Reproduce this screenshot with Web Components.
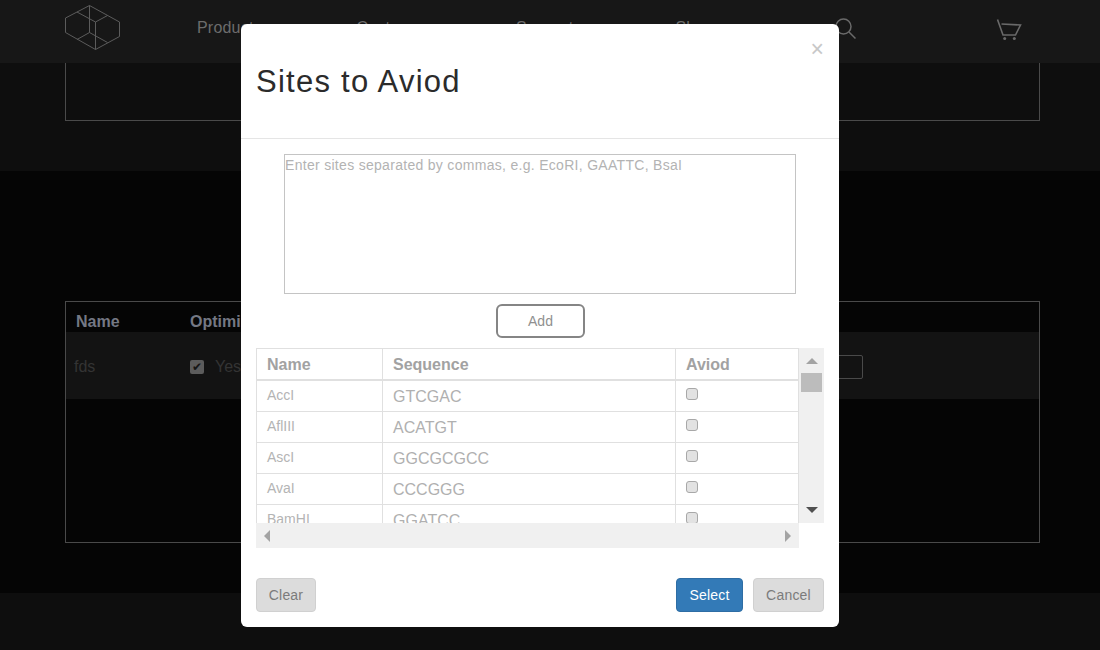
<!DOCTYPE html>
<html>
<head>
<meta charset="utf-8">
<title>Sites to Aviod</title>
<style>
html, body { margin: 0; height: 100%; background: #050505; overflow: hidden; }
body { font-family: "Liberation Sans", Arial, sans-serif; }
</style>
</head>
<body>

<site-header></site-header>
<page-band>
    <order-table></order-table>
</page-band>
<page-footer></page-footer>

<sites-modal title-text="Sites to Aviod">
    <sites-table></sites-table>
</sites-modal>

<script>
class SiteHeader extends HTMLElement {

    static template = document.createElement('template');

    constructor() {
        super();
        this.attachShadow({ mode: 'open' });
        this.shadowRoot.append(SiteHeader.template.content.cloneNode(true));
    }

}

SiteHeader.template.innerHTML = `
<style>
:host { display: block; height: 63px; background: #171717; }
.bar { display: flex; align-items: flex-start; height: 100%; padding-left: 65px; color: #6c6c6c; }
.logo { width: 55px; height: 45px; margin-top: 5px; flex: none; }
nav { display: flex; margin-left: 77px; margin-top: 19px; font-size: 16px; letter-spacing: .2px; }
nav span { width: 159.5px; }
.search { margin-left: 0; margin-top: 18px; flex: none; }
.cart { margin-left: 139px; margin-top: 18px; flex: none; }
</style>
<div class="bar">
    <svg class="logo" viewBox="0 0 55 45" fill="none" stroke="#5c5c5c" stroke-width="1">
        <path d="M24.500 .5 L54.500 17 V31.500 L30.500 44.500 L.5 27.500 V13 Z"/>
        <path d="M24.500 .5 V27.500 M30.500 17 V44.500 M12 7 L30.500 17 L42.500 10.500 M12 34.500 L24.500 27.500 L42.500 37.500"/>
    </svg>
    <nav><span>Product</span><span>Custom</span><span>Support</span><span>Share</span></nav>
    <svg class="search" width="22" height="22" viewBox="0 0 22 22" fill="none" stroke="#6a6a6a" stroke-width="1.500">
        <circle cx="8.500" cy="8.500" r="7.500"/>
        <path d="M14 14 L20.500 20.500"/>
    </svg>
    <svg class="cart" width="26" height="24" viewBox="0 0 26 24" fill="none" stroke="#6a6a6a" stroke-width="1.600">
        <path d="M1.500 1.500 L7 17 H19.500 L24.500 7 L5.500 6"/>
        <circle cx="8.700" cy="20.500" r="1.500" fill="#6a6a6a" stroke="none"/>
        <circle cx="18.300" cy="20.500" r="1.500" fill="#6a6a6a" stroke="none"/>
    </svg>
</div>
`;

customElements.define('site-header', SiteHeader);

class PageBand extends HTMLElement {

    static template = document.createElement('template');

    constructor() {
        super();
        this.attachShadow({ mode: 'open' });
        this.shadowRoot.append(PageBand.template.content.cloneNode(true));
    }

}

PageBand.template.innerHTML = `
<style>
:host { display: block; }
.top { height: 108px; background: #0e0e0e; padding: 0 60px 0 65px; box-sizing: border-box; }
.panel { height: 58px; border: 1px solid #4a4a4a; border-top: 0; box-sizing: border-box; }
.main { height: 422px; background: #050505; padding: 130px 60px 0 65px; box-sizing: border-box; }
</style>
<div class="top"><div class="panel"></div></div>
<div class="main"><slot></slot></div>
`;

customElements.define('page-band', PageBand);

class OrderTable extends HTMLElement {

    static template = document.createElement('template');

    constructor() {
        super();
        this.attachShadow({ mode: 'open' });
        this.shadowRoot.append(OrderTable.template.content.cloneNode(true));
    }

}

OrderTable.template.innerHTML = `
<style>
:host { display: block; height: 242px; box-sizing: border-box; border: 1px solid #4a4a4a; font-size: 16px; }
.head { display: flex; height: 30px; padding: 11px 0 0 10px; box-sizing: border-box; color: #747884; font-weight: bold; }
.head span:first-child { width: 114px; }
.row > span:first-child { width: 116px; }
.row { display: flex; align-items: center; height: 67px; padding: 2px 8px 0; box-sizing: border-box; background: #131313; color: #343434; }
.opt { display: flex; align-items: center; gap: 11px; }
.box { width: 14px; height: 14px; border-radius: 2px; background: #5c5c5c; color: #161616; font-size: 12px; line-height: 14px; text-align: center; }
.spacer { flex: 1; }
.input { width: 80px; height: 22px; border: 1px solid #4a4a4a; border-radius: 2px; margin-right: 168px; }
</style>
<div class="head"><span>Name</span><span>Optimize</span></div>
<div class="row">
    <span>fds</span>
    <span class="opt"><span class="box">&#10004;</span>Yes</span>
    <span class="spacer"></span>
    <span class="input"></span>
</div>
`;

customElements.define('order-table', OrderTable);

class PageFooter extends HTMLElement {

    static template = document.createElement('template');

    constructor() {
        super();
        this.attachShadow({ mode: 'open' });
        this.shadowRoot.append(PageFooter.template.content.cloneNode(true));
    }

}

PageFooter.template.innerHTML = `
<style>
:host { display: block; height: 57px; background: #0e0e0e; }
</style>
`;

customElements.define('page-footer', PageFooter);

class SitesModal extends HTMLElement {

    static template = document.createElement('template');

    constructor() {
        super();
        this.attachShadow({ mode: 'open' });
        this.shadowRoot.append(SitesModal.template.content.cloneNode(true));
        this.shadowRoot.querySelector('h4').textContent = this.getAttribute('title-text');
    }

}

SitesModal.template.innerHTML = `
<style>
:host { display: block; position: absolute; left: 241px; top: 24px; width: 598px; height: 603px; background: #fff; border-radius: 6px; box-sizing: border-box; color: #333; }
header { position: relative; height: 115px; border-bottom: 1px solid #e5e5e5; box-sizing: border-box; padding: 39px 15px 0; }
h4 { margin: 0; font-size: 31px; font-weight: normal; line-height: 38px; letter-spacing: 1.250px; color: #2b2b2b; }
.close { position: absolute; right: 15px; top: 14px; font-size: 23px; line-height: 23px; color: #c8c8c8; }
.body { display: flex; flex-direction: column; align-items: center; padding: 15px 15px 0; }
textarea { display: block; width: 512px; height: 140px; box-sizing: border-box; margin: 0; padding: 2px 0; resize: none; border: 1px solid #c4c4c4; outline: 0; font: 14px/17px "Liberation Sans", Arial, sans-serif; letter-spacing: .3px; }
textarea::placeholder { color: #b3b3b3; opacity: 1; }
.add { width: 89px; height: 34px; margin: 10px 0; box-sizing: border-box; padding: 0 0 0 1px; background: #fff; border: 2px solid #858585; border-radius: 6px; font: 14px "Liberation Sans", Arial, sans-serif; color: #909090; }
.table { align-self: stretch; }
footer { display: flex; gap: 10px; padding: 30px 15px 0; }
button.act { height: 34px; box-sizing: border-box; padding: 0; border: 1px solid #d0d0d0; border-radius: 4px; background: #dcdcdc; color: #7b7b7b; font: 14px "Liberation Sans", Arial, sans-serif; letter-spacing: .2px; }
.clear { width: 60px; margin-right: auto; }
button.select { width: 67px; background: #337ab7; border-color: #2e6da4; color: #fff; }
.cancel { width: 71px; }
</style>
<header>
    <h4></h4>
    <span class="close">&times;</span>
</header>
<div class="body">
    <textarea placeholder="Enter sites separated by commas, e.g. EcoRI, GAATTC, BsaI"></textarea>
    <button class="add">Add</button>
    <div class="table"><slot></slot></div>
</div>
<footer>
    <button class="act clear">Clear</button>
    <button class="act select">Select</button>
    <button class="act cancel">Cancel</button>
</footer>
`;

customElements.define('sites-modal', SitesModal);

class SitesTable extends HTMLElement {

    static template = document.createElement('template');

    static sites = [
        ['AccI', 'GTCGAC'],
        ['AflIII', 'ACATGT'],
        ['AscI', 'GGCGCGCC'],
        ['AvaI', 'CCCGGG'],
        ['BamHI', 'GGATCC']
    ];

    constructor() {
        super();
        this.attachShadow({ mode: 'open' });
        this.shadowRoot.append(SitesTable.template.content.cloneNode(true));
        const rows = this.shadowRoot.querySelector('.rows');
        for (const [name, seq] of SitesTable.sites) {
            const row = document.createElement('div');
            row.className = 'tr';
            row.innerHTML = `<span class="c1">${name}</span><span class="c2">${seq}</span><span class="c3"><i class="cb"></i></span>`;
            rows.append(row);
        }
    }

}

SitesTable.template.innerHTML = `
<style>
:host { display: grid; grid-template-columns: 543px 25px; grid-template-rows: 175px 25px; }
.view { overflow: hidden; box-sizing: border-box; border: solid #e0e0e0; border-width: 1px 1px 0 1px; }
.tr, .th { display: grid; grid-template-columns: 126px 293px 1fr; }
.th { height: 32px; box-sizing: border-box; border-bottom: 2px solid #e0e0e0; font-size: 16px; font-weight: bold; color: #a2a2a2; line-height: 31px; }
.tr { height: 31px; box-sizing: border-box; border-bottom: 1px solid #e0e0e0; }
.th span, .tr span { padding-left: 10px; border-right: 1px solid #e0e0e0; box-sizing: border-box; }
.th span:last-child, .tr span:last-child { border-right: 0; }
.c1 { font-size: 14px; color: #b4b4b4; line-height: 28px; }
.c2 { font-size: 16px; color: #b0b0b0; line-height: 31px; }
.cb { display: block; width: 12px; height: 12px; margin-top: 7px; box-sizing: border-box; border: 1px solid #a8a8a8; border-radius: 3px; background: #e2e2e2; }
.vbar { background: #f0f0f0; display: flex; flex-direction: column; align-items: center; }
.hbar { background: #f0f0f0; display: flex; align-items: center; justify-content: space-between; padding: 0 8px; }
.up { width: 0; height: 0; margin: 10px 0 9px; border: 6.500px solid transparent; border-top: 0; border-bottom: 6.500px solid #a3a3a3; }
.thumb { width: 21px; height: 19px; background: #bcbcbc; }
.down { width: 0; height: 0; margin-top: auto; margin-bottom: 10px; border: 6.500px solid transparent; border-bottom: 0; border-top: 6.500px solid #505050; }
.left { width: 0; height: 0; border: 6.500px solid transparent; border-left: 0; border-right: 6.500px solid #a3a3a3; }
.right { width: 0; height: 0; border: 6.500px solid transparent; border-right: 0; border-left: 6.500px solid #a3a3a3; }
</style>
<div class="view">
    <div class="th"><span>Name</span><span>Sequence</span><span>Aviod</span></div>
    <div class="rows"></div>
</div>
<div class="vbar"><i class="up"></i><i class="thumb"></i><i class="down"></i></div>
<div class="hbar"><i class="left"></i><i class="right"></i></div>
<div class="corner"></div>
`;

customElements.define('sites-table', SitesTable);
</script>
</body>
</html>
